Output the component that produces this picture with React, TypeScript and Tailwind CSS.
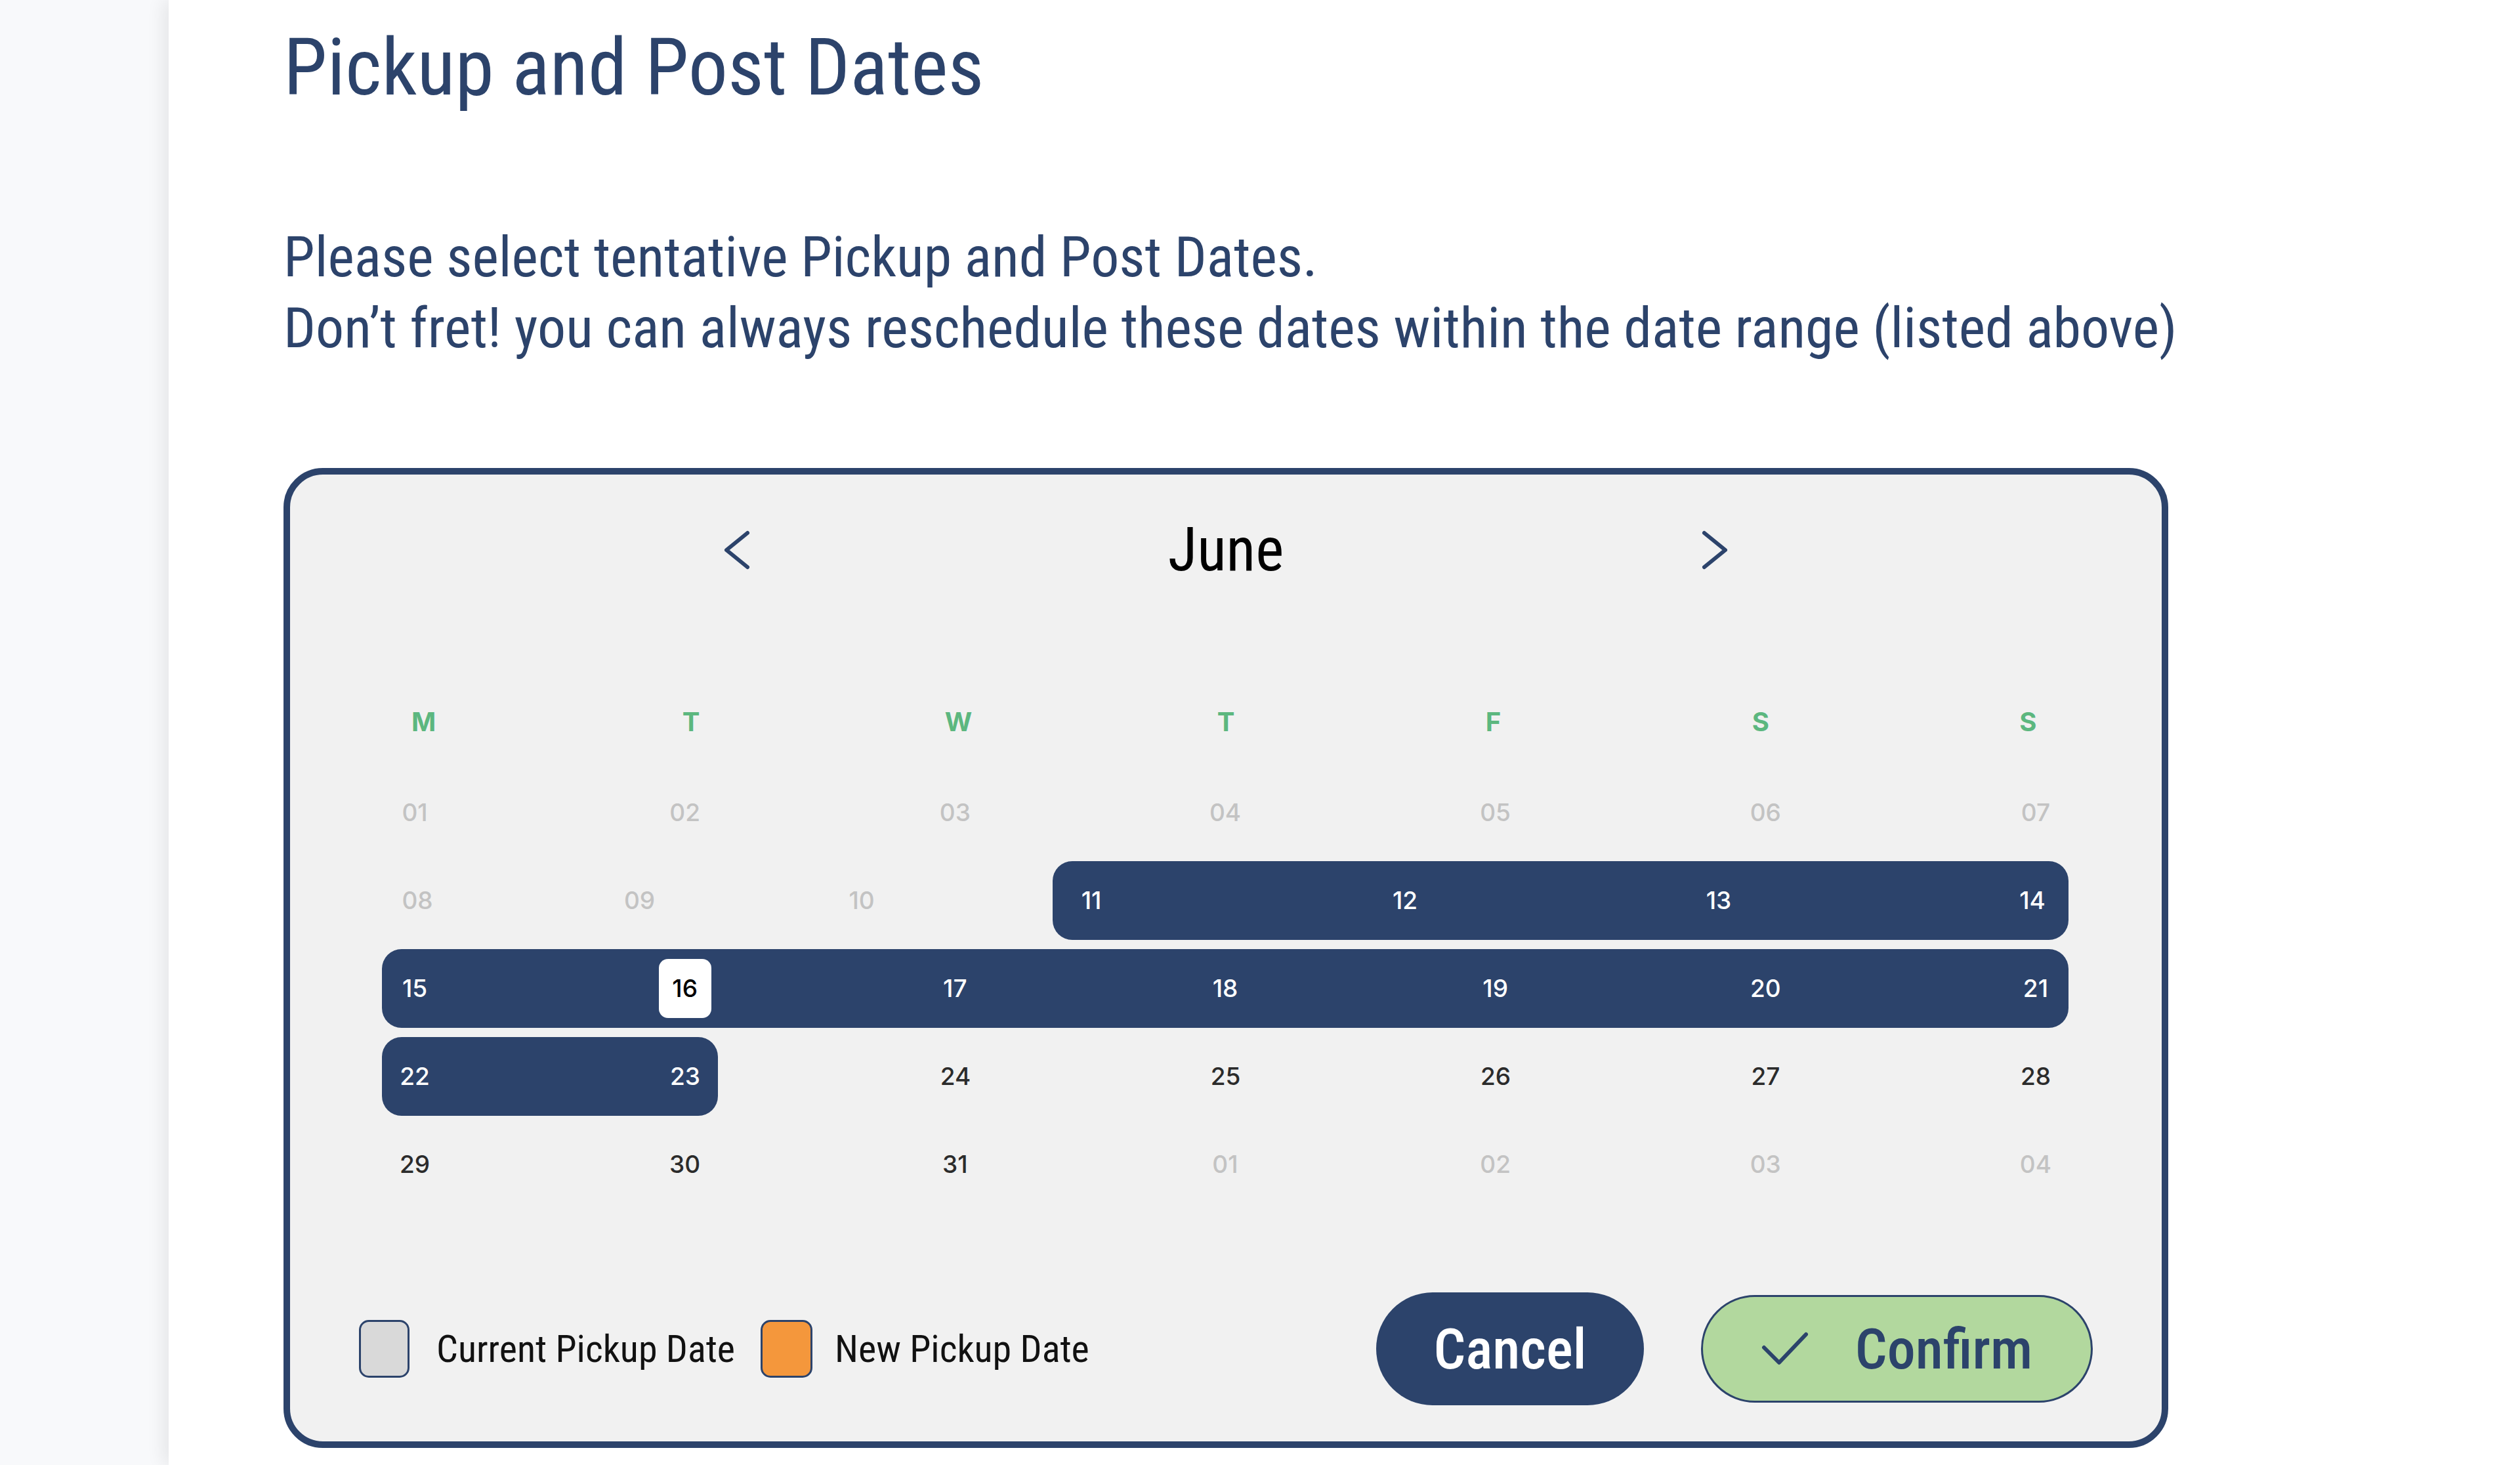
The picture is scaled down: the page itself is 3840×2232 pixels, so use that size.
const NAVY = "#2c436b";
const CONDENSED = "'Roboto Condensed', 'Open Sans', sans-serif";

function Day({ d, tone }: { d: string; tone: "muted" | "dark" | "light" | "active" }) {
  if (tone === "active") {
    return (
      <span className="w-[80px] h-[90px] rounded-[14px] bg-white text-black flex items-center justify-center">
        {d}
      </span>
    );
  }
  const color =
    tone === "muted" ? "text-[#c3c3c3]" : tone === "dark" ? "text-[#2b2b2b]" : "text-white";
  return <span className={`w-[80px] text-center ${color}`}>{d}</span>;
}

function Chevron({ dir }: { dir: "left" | "right" }) {
  return (
    <svg width="40" height="60" viewBox="0 0 40 60" fill="none">
      <polyline
        points={dir === "left" ? "36,4 4,30 36,56" : "4,4 36,30 4,56"}
        stroke={NAVY}
        strokeWidth="6"
        strokeLinecap="round"
        strokeLinejoin="round"
      />
    </svg>
  );
}

export default function App() {
  const weekdays = ["M", "T", "W", "T", "F", "S", "S"];
  const rowCls = "h-[120px] flex items-center";

  return (
    <div className="min-h-screen flex bg-white" style={{ fontFamily: CONDENSED }}>
      <aside className="w-[257px] shrink-0 bg-[#f8f9fb]" />

      <main className="relative flex-1 bg-white pl-[175px] shadow-[-10px_0_24px_rgba(0,0,0,0.07)]">
        <h1 className="mt-[43px] h-[120px] text-[120px] leading-none font-normal text-[#2c436b] whitespace-nowrap">
          Pickup and Post Dates
        </h1>

        <div className="mt-[175px] text-[86px] leading-[108px] font-normal text-[#2c436b] whitespace-nowrap">
          <p>Please select tentative Pickup and Post Dates.</p>
          <p>Don’t fret! you can always reschedule these dates within the date range (listed above)</p>
        </div>

        {/* calendar */}
        <div className="mt-[159px] w-[2872px] rounded-[60px] border-[10px] border-[#2c436b] bg-[#f1f1f1]">
          <div className="mt-[65px] h-[100px] flex items-center justify-center">
            <div className="w-[1530px] flex items-center justify-between">
              <Chevron dir="left" />
              <span className="text-[92px] leading-none font-normal text-black">June</span>
              <Chevron dir="right" />
            </div>
          </div>

          <div
            className="mt-[182px] h-[60px] grid grid-cols-7 items-center text-[40px] font-bold text-[#5cb77f]"
            style={{ fontFamily: "Inter, sans-serif" }}
          >
            {weekdays.map((w, i) => (
              <span key={i} className="text-center">
                {w}
              </span>
            ))}
          </div>

          <div
            className="mt-[48px] pl-[140px] pr-[142px] flex flex-col gap-[14px] text-[37px] font-medium"
            style={{ fontFamily: "Inter, sans-serif" }}
          >
            <div className={`${rowCls} justify-between px-[10px]`}>
              {["01", "02", "03", "04", "05", "06", "07"].map((d) => (
                <Day key={d} d={d} tone="muted" />
              ))}
            </div>

            <div className={rowCls}>
              <div className="w-[1022px] flex justify-between pl-[14px] pr-[251px]">
                {["08", "09", "10"].map((d) => (
                  <Day key={d} d={d} tone="muted" />
                ))}
              </div>
              <div className="flex-1 h-full rounded-[30px] bg-[#2c436b] flex items-center justify-between pl-[19px] pr-[15px]">
                {["11", "12", "13", "14"].map((d) => (
                  <Day key={d} d={d} tone="light" />
                ))}
              </div>
            </div>

            <div className={`${rowCls} justify-between px-[10px] rounded-[30px] bg-[#2c436b]`}>
              {["15", "16", "17", "18", "19", "20", "21"].map((d) => (
                <Day key={d} d={d} tone={d === "16" ? "active" : "light"} />
              ))}
            </div>

            <div className={rowCls}>
              <div className="w-[512px] h-full rounded-[30px] bg-[#2c436b] flex items-center justify-between px-[10px]">
                <Day d="22" tone="light" />
                <Day d="23" tone="light" />
              </div>
              <div className="flex-1 flex justify-between pl-[322px] pr-[10px]">
                {["24", "25", "26", "27", "28"].map((d) => (
                  <Day key={d} d={d} tone="dark" />
                ))}
              </div>
            </div>

            <div className={`${rowCls} justify-between px-[10px]`}>
              {["29", "30", "31"].map((d) => (
                <Day key={d} d={d} tone="dark" />
              ))}
              {["01", "02", "03", "04"].map((d) => (
                <Day key={"n" + d} d={d} tone="muted" />
              ))}
            </div>
          </div>

          {/* legend + actions */}
          <div className="mt-[135px] mb-[55px] h-[172px] px-[105px] flex items-center justify-between">
            <div className="flex items-center text-[58px] font-normal text-[#111]">
              <span className="w-[77px] h-[88px] rounded-[15px] border-[3px] border-[#2c436b] bg-[#d9d9d9]" />
              <span className="ml-[41px]">Current Pickup Date</span>
              <span className="ml-[39px] w-[79px] h-[88px] rounded-[15px] border-[3px] border-[#2c436b] bg-[#f4973c]" />
              <span className="ml-[34px]">New Pickup Date</span>
            </div>

            <div className="flex items-center gap-[87px] text-[86px] font-medium">
              <button className="w-[408px] h-[172px] rounded-full bg-[#2c436b] text-white flex items-center justify-center">
                Cancel
              </button>
              <button className="w-[597px] h-[164px] rounded-full border-[3px] border-[#2c436b] bg-[#b2d89e] text-[#2c436b] flex items-center justify-center gap-[71px]">
                <svg width="72" height="52" viewBox="0 0 72 52" fill="none">
                  <polyline
                    points="4,24 27,47 68,4"
                    stroke={NAVY}
                    strokeWidth="6"
                    strokeLinecap="round"
                    strokeLinejoin="round"
                  />
                </svg>
                <span>Confirm</span>
              </button>
            </div>
          </div>
        </div>
      </main>
    </div>
  );
}
